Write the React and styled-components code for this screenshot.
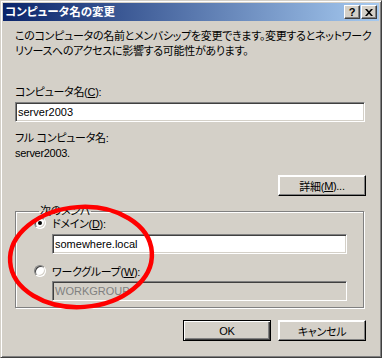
import React from "react";
import styled, { createGlobalStyle } from "styled-components";

const Global = createGlobalStyle`
  html, body { margin: 0; padding: 0; background: #d4d0c8; }
  body { font-family: "Liberation Sans", "Noto Sans CJK JP", sans-serif; font-size: 11px; }
`;

const Window = styled.div`
  position: relative;
  box-sizing: border-box;
  width: 382px;
  height: 358px;
  background: #d4d0c8;
  border-top: 1px solid #d4d0c8;
  border-left: 1px solid #d4d0c8;
  border-right: 1px solid #404040;
  border-bottom: 1px solid #404040;
  box-shadow: inset 1px 1px 0 #ffffff, inset -1px -1px 0 #808080;
  padding: 2px;
  display: flex;
  flex-direction: column;
  overflow: hidden;
  font-feature-settings: "palt";
  letter-spacing: -0.3px;
  color: #000;
`;

const TitleBar = styled.div`
  height: 18px;
  display: flex;
  align-items: center;
  background: linear-gradient(to right, #0a246a, #a6caf0);
  padding: 0 2px 0 2px;
`;

const TitleText = styled.div`
  flex: 1;
  color: #fff;
  font-weight: bold;
  font-size: 11.5px;
  letter-spacing: 0;
  line-height: 18px;
  white-space: nowrap;
`;

const TitleButton = styled.div`
  box-sizing: border-box;
  width: 16px;
  height: 14px;
  margin-left: ${(p) => p.$gap || 0}px;
  background: #d4d0c8;
  border-top: 1px solid #ffffff;
  border-left: 1px solid #ffffff;
  border-right: 1px solid #404040;
  border-bottom: 1px solid #404040;
  box-shadow: inset -1px -1px 0 #808080;
  display: flex;
  align-items: center;
  justify-content: center;
  font-family: "Liberation Sans", sans-serif;
  font-weight: bold;
  font-size: 11px;
  line-height: 1;
  color: #000;
`;

const Content = styled.div`
  flex: 1;
  display: flex;
  flex-direction: column;
  padding: 8px 14px 0 12px;
`;

const Para = styled.p`
  margin: 0;
  line-height: 15px;
  white-space: nowrap;
`;

const Label = styled.div`
  line-height: 15px;
  margin-top: ${(p) => p.$mt || 0}px;
  white-space: nowrap;
`;

const U = styled.span`
  text-decoration: underline;
`;

const Field = styled.div`
  box-sizing: border-box;
  height: 20px;
  width: ${(p) => p.$w}px;
  margin-top: ${(p) => p.$mt || 0}px;
  margin-left: ${(p) => p.$ml || 0}px;
  background: ${(p) => (p.$disabled ? "#d4d0c8" : "#ffffff")};
  color: ${(p) => (p.$disabled ? "#808080" : "#000")};
  border-top: 1px solid #808080;
  border-left: 1px solid #808080;
  border-right: 1px solid #ffffff;
  border-bottom: 1px solid #ffffff;
  box-shadow: inset 1px 1px 0 #404040, inset -1px -1px 0 #d4d0c8;
  padding: 0 2px;
  line-height: 18px;
  font-size: 11px;
  letter-spacing: 0;
  white-space: nowrap;
`;

const Button = styled.div`
  box-sizing: border-box;
  width: 88px;
  height: 21px;
  background: #d4d0c8;
  display: flex;
  align-items: center;
  justify-content: center;
  border-top: 1px solid ${(p) => (p.$default ? "#000" : "#ffffff")};
  border-left: 1px solid ${(p) => (p.$default ? "#000" : "#ffffff")};
  border-right: 1px solid #000;
  border-bottom: 1px solid #000;
  box-shadow: ${(p) =>
    p.$default
      ? "inset 1px 1px 0 #ffffff, inset -1px -1px 0 #404040, inset -2px -2px 0 #808080"
      : "inset -1px -1px 0 #808080, inset 1px 1px 0 #ffffff"};
`;

const ButtonRow = styled.div`
  display: flex;
  justify-content: flex-end;
  gap: ${(p) => p.$gap || 0}px;
  margin-top: ${(p) => p.$mt || 0}px;
  margin-right: -1px;
`;

const Group = styled.fieldset`
  box-sizing: border-box;
  width: 349px;
  height: 103px;
  margin: 9px 0 0 0;
  padding: 0 0 0 18px;
  border: 1px solid #808080;
  box-shadow: 1px 1px 0 #ffffff, inset 1px 1px 0 #ffffff;
  display: flex;
  flex-direction: column;
`;

const Legend = styled.legend`
  padding: 0 1px;
  margin-left: 5px;
  line-height: 12px;
`;

const RadioRow = styled.div`
  display: flex;
  align-items: center;
  gap: 6px;
  height: 14px;
  margin-top: ${(p) => p.$mt || 0}px;
`;

const Radio = styled.span`
  position: relative;
  box-sizing: border-box;
  width: 12px;
  height: 12px;
  border-radius: 50%;
  background: #fff;
  border: 1px solid;
  border-color: #808080 #ffffff #ffffff #808080;
  box-shadow: inset 1px 1px 0 #404040, inset -1px -1px 0 #d4d0c8;
  &::after {
    content: "";
    display: ${(p) => (p.$checked ? "block" : "none")};
    position: absolute;
    left: 3px;
    top: 3px;
    width: 4px;
    height: 4px;
    border-radius: 50%;
    background: #000;
  }
`;

const Overlay = styled.svg`
  position: absolute;
  left: 0;
  top: 0;
  pointer-events: none;
`;

export default function App() {
  return (
    <>
      <Global />
      <Window>
        <TitleBar>
          <TitleText>コンピュータ名の変更</TitleText>
          <TitleButton>?</TitleButton>
          <TitleButton $gap={1}>
            <svg width="8" height="7" viewBox="0 0 8 7">
              <path d="M0 0h2l2 2.2L6 0h2L5 3.5 8 7H6L4 4.8 2 7H0l3-3.5z" fill="#000" />
            </svg>
          </TitleButton>
        </TitleBar>
        <Content>
          <Para>
            このコンピュータの名前とメンバシップを変更できます。変更するとネットワーク
            <br />
            リソースへのアクセスに影響する可能性があります。
          </Para>
          <Label $mt={26}>
            コンピュータ名(<U>C</U>):
          </Label>
          <Field $w={350} $mt={2}>server2003</Field>
          <Label $mt={9}>フル コンピュータ名:</Label>
          <Label $mt={0}>server2003.</Label>
          <ButtonRow $mt={14}>
            <Button>
              詳細(<U>M</U>)...
            </Button>
          </ButtonRow>
          <Group>
            <Legend>次のメンバ</Legend>
            <RadioRow $mt={-1}>
              <Radio $checked />
              <span>
                ドメイン(<U>D</U>):
              </span>
            </RadioRow>
            <Field $w={295} $mt={4} $ml={18}>somewhere.local</Field>
            <RadioRow $mt={10}>
              <Radio />
              <span>
                ワークグループ(<U>W</U>):
              </span>
            </RadioRow>
            <Field $w={295} $mt={3} $ml={18} $disabled>
              WORKGROUP
            </Field>
          </Group>
          <ButtonRow $mt={12} $gap={7}>
            <Button $default>OK</Button>
            <Button>キャンセル</Button>
          </ButtonRow>
        </Content>
        <Overlay width="382" height="358" viewBox="0 0 382 358">
          <ellipse
            cx="80"
            cy="256"
            rx="71"
            ry="50"
            fill="none"
            stroke="#ff0000"
            strokeWidth="4.5"
            transform="rotate(-4 80 256)"
          />
        </Overlay>
      </Window>
    </>
  );
}
